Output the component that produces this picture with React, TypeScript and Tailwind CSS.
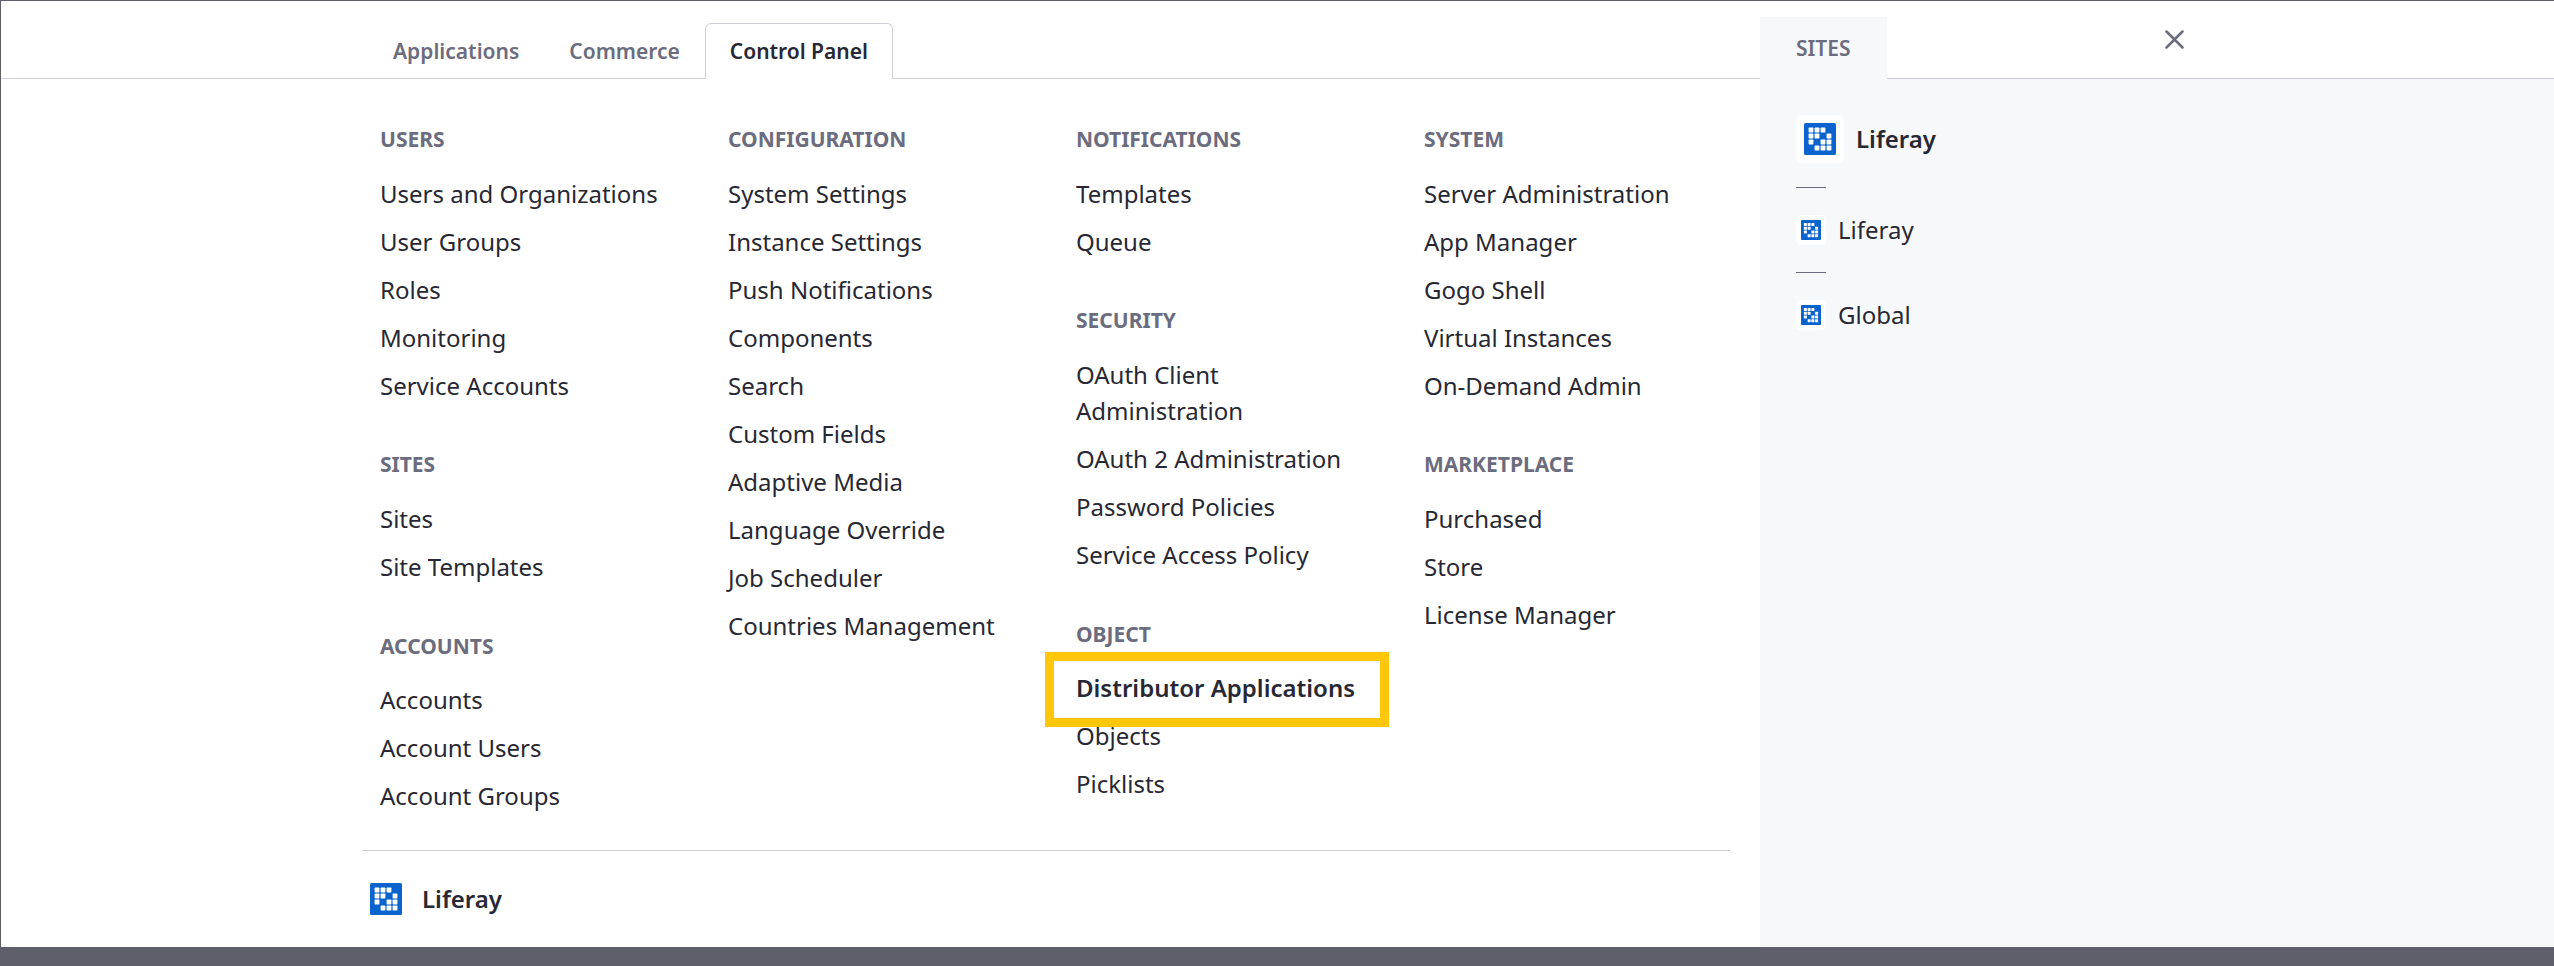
import { clsx } from "clsx";

type Group = { title: string; items: string[] };

const columns: Group[][] = [
  [
    { title: "USERS", items: ["Users and Organizations", "User Groups", "Roles", "Monitoring", "Service Accounts"] },
    { title: "SITES", items: ["Sites", "Site Templates"] },
    { title: "ACCOUNTS", items: ["Accounts", "Account Users", "Account Groups"] },
  ],
  [
    {
      title: "CONFIGURATION",
      items: [
        "System Settings", "Instance Settings", "Push Notifications", "Components", "Search",
        "Custom Fields", "Adaptive Media", "Language Override", "Job Scheduler", "Countries Management",
      ],
    },
  ],
  [
    { title: "NOTIFICATIONS", items: ["Templates", "Queue"] },
    {
      title: "SECURITY",
      items: ["OAuth Client Administration", "OAuth 2 Administration", "Password Policies", "Service Access Policy"],
    },
    { title: "OBJECT", items: ["Distributor Applications", "Objects", "Picklists"] },
  ],
  [
    {
      title: "SYSTEM",
      items: ["Server Administration", "App Manager", "Gogo Shell", "Virtual Instances", "On-Demand Admin"],
    },
    { title: "MARKETPLACE", items: ["Purchased", "Store", "License Manager"] },
  ],
];

const highlighted = "Distributor Applications";

const dots = [[0, 0], [1, 0], [2, 0], [0, 1], [1, 1], [3, 1], [0, 2], [2, 2], [3, 2], [1, 3], [2, 3], [3, 3]];

function Logo({ className }: { className: string }) {
  return (
    <svg viewBox="0 0 32 32" className={className}>
      <rect width="32" height="32" rx="1.6" fill="#0b63ce" />
      {dots.map(([x, y]) => (
        <rect key={`${x}-${y}`} x={4.6 + x * 6} y={4.6 + y * 6} width="4.8" height="4.8" rx="0.7" fill="#fff" />
      ))}
    </svg>
  );
}

function MenuItem({ label }: { label: string }) {
  const active = label === highlighted;
  return (
    <li className={clsx("relative leading-9", active && "font-semibold whitespace-nowrap")}>
      {label}
      {active && <span className="absolute -top-[18px] -left-[31px] h-[75px] w-[344px] border-[9px] border-[#ffc60a]" />}
    </li>
  );
}

function MenuGroup({ title, items }: Group) {
  return (
    <section className="mb-[45.75px]">
      <h2 className="mb-5 text-[21px] leading-[31.5px] font-bold text-[#6b6c7e]">{title}</h2>
      <ul className="flex flex-col gap-3">
        {items.map((item) => (
          <MenuItem key={item} label={item} />
        ))}
      </ul>
    </section>
  );
}

function SiteLink({ name }: { name: string }) {
  return (
    <a className="flex h-[30px] items-center gap-3">
      <span className="flex size-[30px] items-center justify-center rounded-[5px] bg-white">
        <Logo className="size-5" />
      </span>
      {name}
    </a>
  );
}

export default function App() {
  return (
    <div className="flex h-[966px] w-[2554px] flex-col overflow-hidden border-t border-l border-[#5f5e6b] bg-[#5f5e6b] font-['Noto_Sans',sans-serif] text-[24px] text-[#272833]">
      <div className="flex h-[946px] shrink-0">
        <main className="flex w-[1759px] shrink-0 flex-col bg-white">
          <nav className="flex h-[78px] shrink-0 items-end border-b border-[#cdced9] pl-[367px] text-[21px] font-semibold text-[#6b6c7e]">
            <a className="flex h-[55px] items-center px-[25px] pt-0.5">Applications</a>
            <a className="flex h-[55px] items-center px-[25px] pt-0.5">Commerce</a>
            <a className="-mb-px flex h-14 items-center rounded-t-[6px] border border-b-0 border-[#cdced9] bg-white px-6 text-[#272833]">
              Control Panel
            </a>
          </nav>
          <div className="ml-[361px] flex h-[771px] w-[1368px] shrink-0 pt-[45px] pl-[18px]">
            {columns.map((groups, index) => (
              <div key={index} className="w-[348px] shrink-0 pr-9">
                {groups.map((group) => (
                  <MenuGroup key={group.title} {...group} />
                ))}
              </div>
            ))}
          </div>
          <footer className="ml-[361px] flex h-[97px] w-[1368px] shrink-0 items-center gap-5 border-t border-[#cdced9] pl-2 font-semibold">
            <Logo className="size-8" />
            Liferay
          </footer>
        </main>
        <aside className="flex flex-1 flex-col bg-[#f7f8f9]">
          <header className="flex h-[78px] shrink-0 items-end bg-white">
            <h2 className="flex h-[62px] w-[127px] items-center bg-[#f7f8f9] pt-px pl-9 text-[21px] font-semibold text-[#6b6c7e]">
              SITES
            </h2>
            <div className="flex h-[78px] flex-1 items-start border-b border-[#cdced9] bg-white pt-[29px] pl-[278px]">
              <svg viewBox="0 0 19 19" className="size-[19px]" fill="none" stroke="#6b6c7e" strokeWidth="2.5" strokeLinecap="round">
                <path d="M1.5 1.5l16 16M17.5 1.5l-16 16" />
              </svg>
            </div>
          </header>
          <div className="flex flex-col items-start pt-9 pl-9">
            <a className="flex h-12 items-center gap-3 font-semibold">
              <span className="flex size-12 items-center justify-center rounded-[6px] bg-white">
                <Logo className="size-8" />
              </span>
              Liferay
            </a>
            <hr className="mt-6 mb-[27px] w-[30px] border-[#6b6c7e]" />
            <SiteLink name="Liferay" />
            <hr className="my-[27px] w-[30px] border-[#6b6c7e]" />
            <SiteLink name="Global" />
          </div>
        </aside>
      </div>
    </div>
  );
}
